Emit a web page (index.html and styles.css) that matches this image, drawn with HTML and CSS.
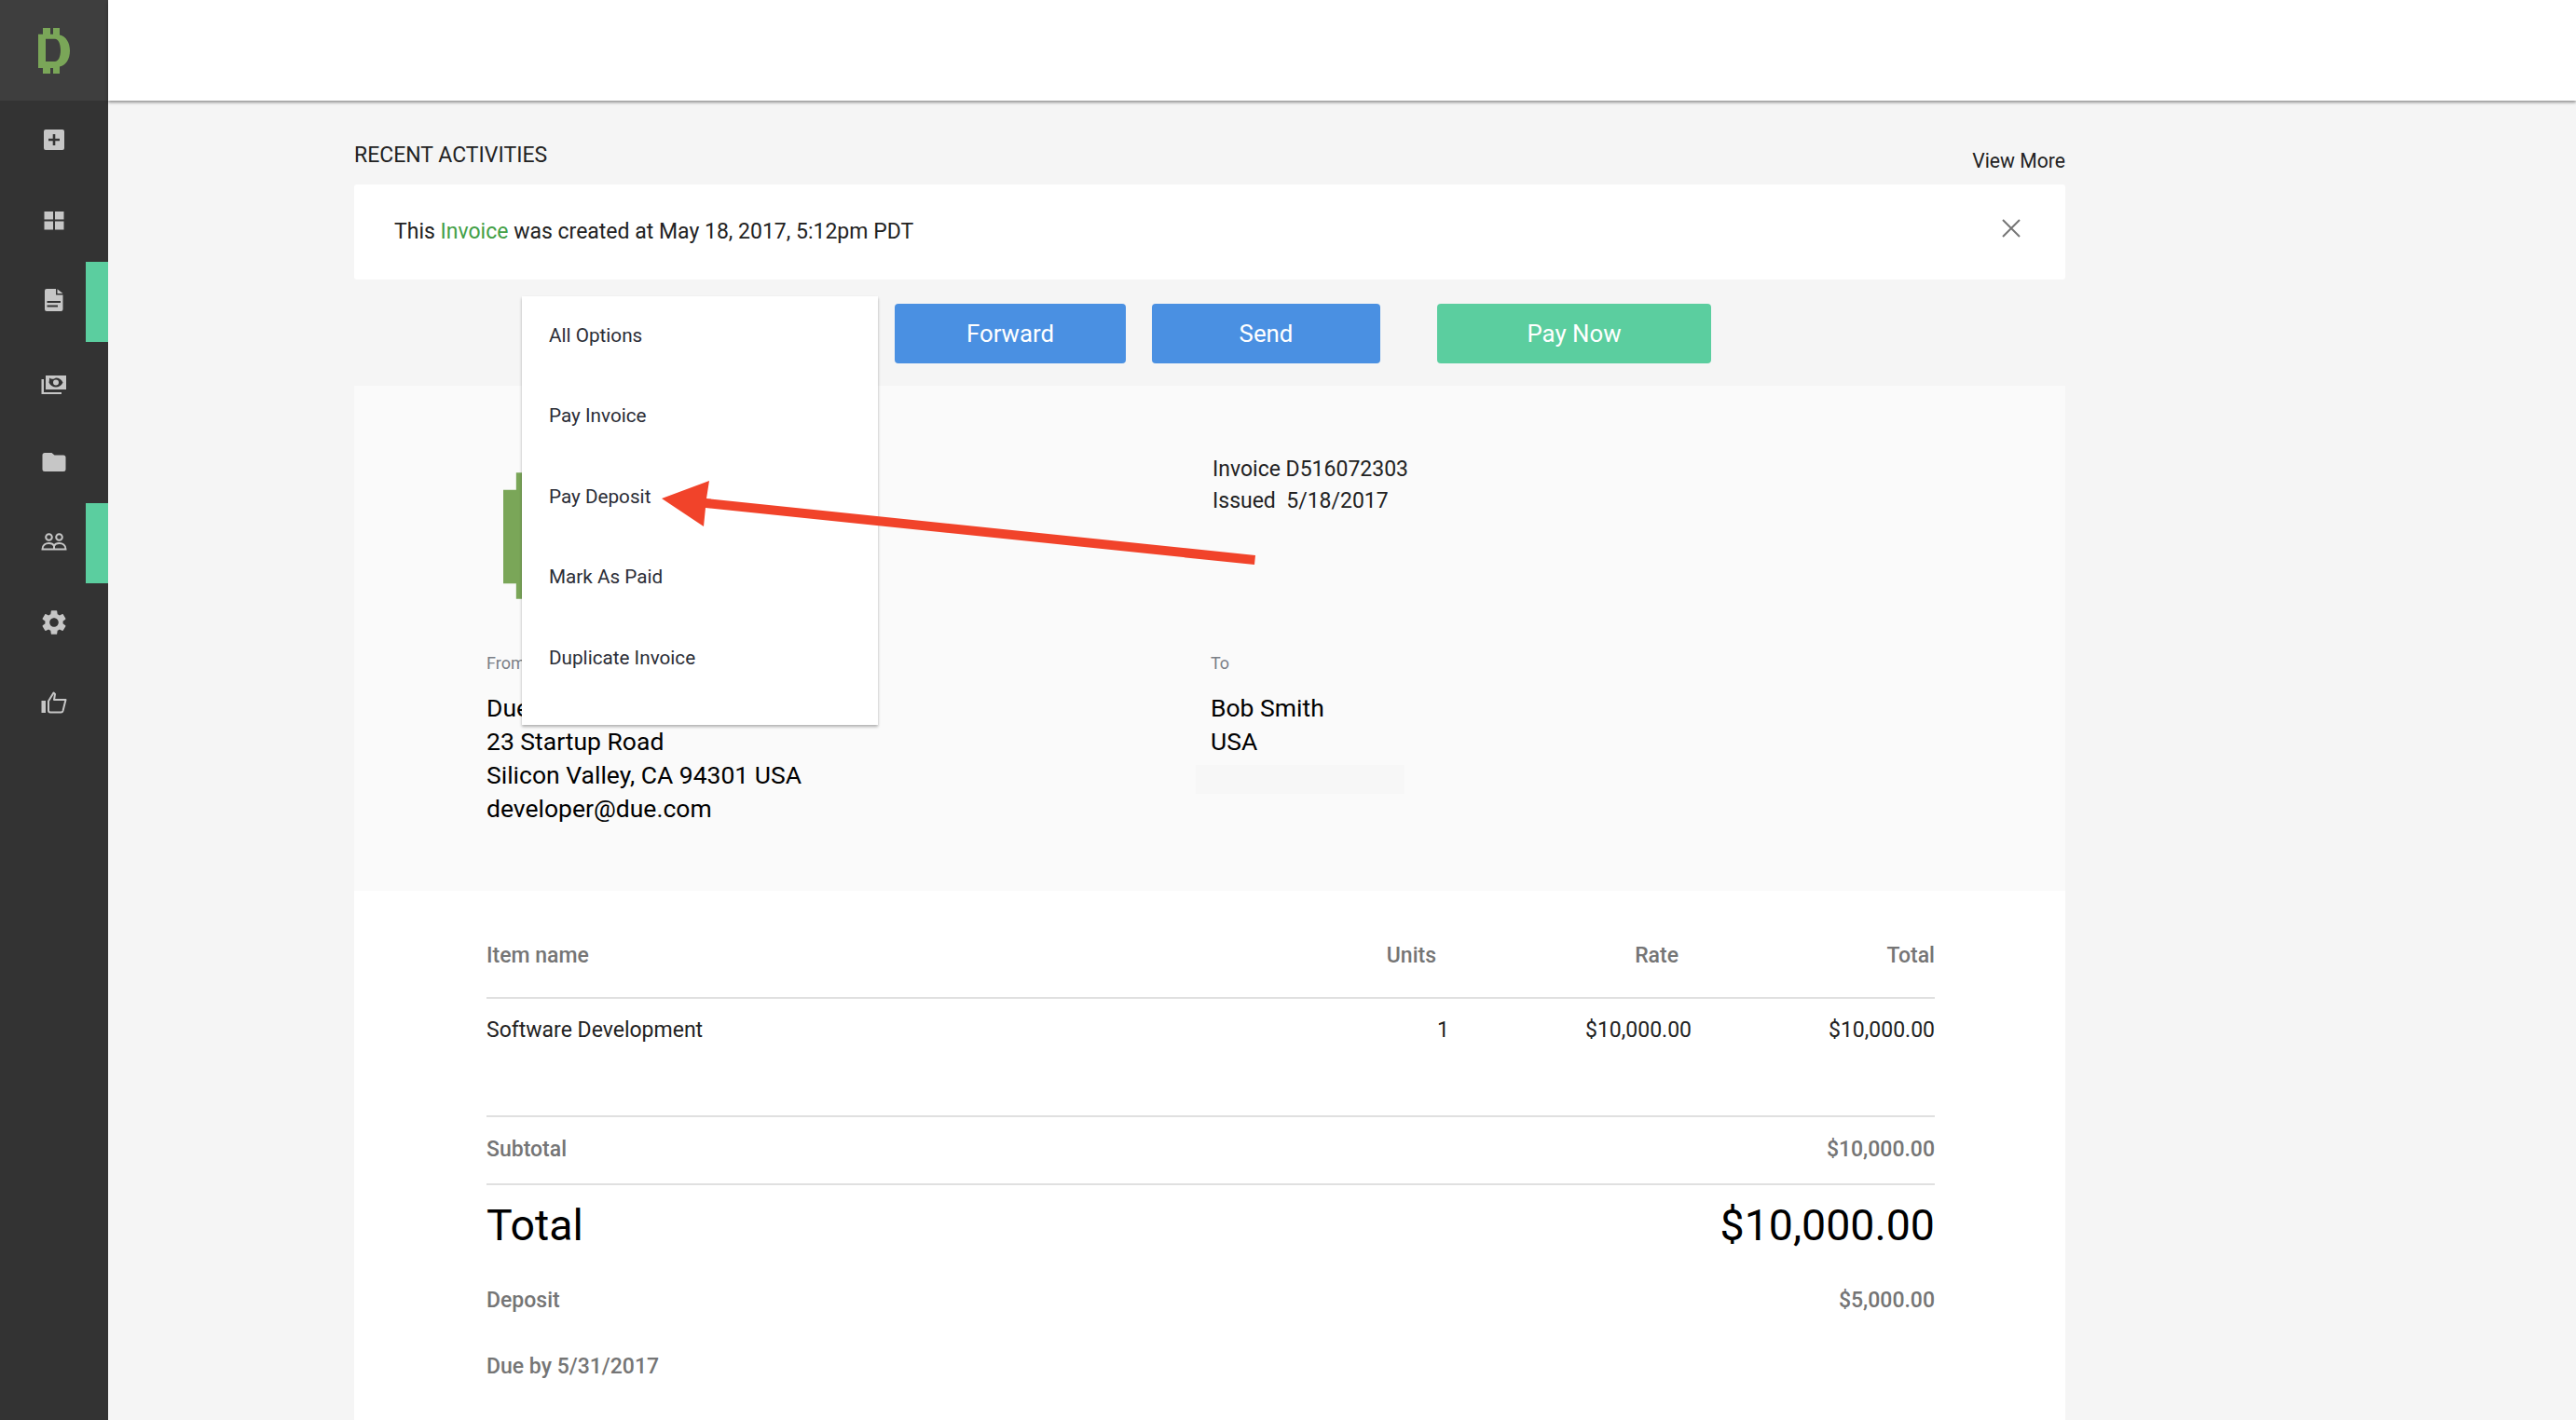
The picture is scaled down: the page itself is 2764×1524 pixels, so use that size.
FILE: index.html
```html
<!DOCTYPE html>
<html>
<head>
  <meta charset="UTF-8">
  <title>Invoice</title>
  <link rel="stylesheet" href="styles.css">
</head>
<body>
  <div class="sidebar">
    <div class="brand">
      <svg class="logo-small" viewBox="0 0 34 49"><path fill-rule="evenodd" d="M0 6.7H5V0H13V6.7H16V0H23V7.5C30 9 34 16 34 24.5C34 33 30 40 23 41.5V49H16V43H13V49H5V43H0ZM8 11.7V36H18C21.500 36 24 31 24 24C24 17 21.500 11.7 18 11.7Z"/></svg>
    </div>
    <div class="nav-item">
      <svg class="icon" viewBox="0 0 32 32"><path fill-rule="evenodd" d="M7 5H25A2 2 0 0 1 27 7V25A2 2 0 0 1 25 27H7A2 2 0 0 1 5 25V7A2 2 0 0 1 7 5ZM14.7 10V14.7H10V17.3H14.7V22H17.3V17.3H22V14.7H17.3V10Z"/></svg>
    </div>
    <div class="nav-item">
      <svg class="icon" viewBox="0 0 32 32"><path d="M5.500 7H15V15.500H5.500ZM17 7H26.500V15.500H17ZM5.500 17.500H15V26.500H5.500ZM17 17.500H26.500V26.500H17Z"/></svg>
    </div>
    <div class="nav-item active">
      <svg class="icon" viewBox="0 0 32 32"><path fill-rule="evenodd" d="M8 4H18V10.500H25.500V26A2 2 0 0 1 23.500 28H8A2 2 0 0 1 6 26V6A2 2 0 0 1 8 4ZM19.500 4.300L25.500 9H19.500ZM8.500 17V19H23V17ZM8.500 21.500V23.500H20V21.500Z"/></svg>
    </div>
    <div class="nav-item">
      <svg class="icon icon-money" viewBox="0 0 32 32"><path fill-rule="evenodd" d="M7 6H29V21H7ZM11 8.500C13 10 15 10.500 18 8.500C21 8.500 24 10 25.500 13.500C24 17 21 18.500 18 18.500C15 18.500 12 17 10.500 13.500C11 11.500 11 10 11 8.500ZM18 10.500A3 3 0 1 0 18 16.500A3 3 0 1 0 18 10.500ZM2.500 10H5V24H24V26H2.500Z"/></svg>
    </div>
    <div class="nav-item">
      <svg class="icon" viewBox="0 0 32 32"><path d="M6 7H13.500L16.500 9.500H26A2.500 2.500 0 0 1 28.500 12V24.500A2.500 2.500 0 0 1 26 27H6A2.500 2.500 0 0 1 3.500 24.500V9.500A2.500 2.500 0 0 1 6 7Z"/></svg>
    </div>
    <div class="nav-item active">
      <svg class="icon icon-line" viewBox="0 0 32 32"><circle cx="10.500" cy="10.500" r="3.300"/><circle cx="21.500" cy="10.500" r="3.300"/><path d="M3.500 23.500H28.500C28.500 19 25 17 21.500 17C19 17 17 18 16 19.800C15 18 13 17 10.500 17C7 17 3.500 19 3.500 23.500ZM16 19.800V23.500"/></svg>
    </div>
    <div class="nav-item">
      <svg class="icon" viewBox="0 0 24 24"><path d="M19.140 12.940c.04-.3.06-.61.06-.94 0-.32-.02-.64-.07-.94l2.030-1.580c.18-.14.23-.41.12-.61l-1.920-3.320c-.12-.22-.37-.29-.59-.22l-2.390.96c-.5-.38-1.030-.7-1.620-.94l-.36-2.540c-.04-.24-.24-.41-.48-.41h-3.840c-.24 0-.43.17-.47.41l-.36 2.540c-.59.24-1.130.57-1.620.94l-2.390-.96c-.22-.08-.47 0-.59.22L2.740 8.870c-.12.21-.08.47.12.61l2.030 1.580c-.05.3-.09.63-.09.94s.02.64.07.94l-2.030 1.580c-.18.14-.23.41-.12.61l1.920 3.320c.12.22.37.29.59.22l2.390-.96c.5.38 1.030.7 1.620.94l.36 2.540c.05.24.24.41.48.41h3.840c.24 0 .44-.17.47-.41l.36-2.540c.59-.24 1.130-.56 1.620-.94l2.390.96c.22.08.47 0 .59-.22l1.920-3.320c.12-.22.07-.47-.12-.61l-2.010-1.580zM12 15.600c-1.980 0-3.600-1.620-3.600-3.600s1.620-3.600 3.600-3.600 3.600 1.620 3.600 3.600-1.620 3.600-3.600 3.600z"/></svg>
    </div>
    <div class="nav-item">
      <svg class="icon icon-thumb" viewBox="0 0 32 32"><path d="M2.500 14H7V27H2.500Z" class="solid"/><path d="M10 14.500L15.500 5.500L17 7L16 13H28.500L25.500 25C25.200 26 24.500 26.500 23.500 26.500H12C10.800 26.500 10 25.700 10 24.500Z"/></svg>
    </div>
  </div>

  <div class="main">
    <div class="topbar"></div>
    <div class="content">
      <div class="activity-head">
        <span class="activity-title">RECENT ACTIVITIES</span>
        <span class="view-more">View More</span>
      </div>

      <div class="notice">
        <span>This <span class="notice-link">Invoice</span> was created at May 18, 2017, 5:12pm PDT</span>
        <svg class="notice-close" viewBox="0 0 20 20"><path d="M1 1L19 19M19 1L1 19"/></svg>
      </div>

      <div class="action-bar">
        <div class="menu">
          <div class="menu-item">All Options</div>
          <div class="menu-item">Pay Invoice</div>
          <div class="menu-item">Pay Deposit</div>
          <div class="menu-item">Mark As Paid</div>
          <div class="menu-item">Duplicate Invoice</div>
        </div>
        <button class="btn btn-forward">Forward</button>
        <button class="btn btn-send">Send</button>
        <button class="btn btn-pay">Pay Now</button>
      </div>

      <div class="invoice-top">
        <div class="invoice-col">
          <svg class="logo-large" viewBox="0 0 34 49"><path fill-rule="evenodd" d="M0 6.7H5V0H13V6.7H16V0H23V7.5C30 9 34 16 34 24.5C34 33 30 40 23 41.5V49H16V43H13V49H5V43H0ZM8 11.7V36H18C21.500 36 24 31 24 24C24 17 21.500 11.7 18 11.7Z"/></svg>
          <div class="party-label">From</div>
          <div class="party">
            <div>Due</div>
            <div>23 Startup Road</div>
            <div>Silicon Valley, CA 94301 USA</div>
            <div>developer@due.com</div>
          </div>
        </div>
        <div class="invoice-col">
          <div class="invoice-meta">
            <div>Invoice D516072303</div>
            <div>Issued&nbsp; 5/18/2017</div>
          </div>
          <div class="party-label">To</div>
          <div class="party">
            <div>Bob Smith</div>
            <div>USA</div>
            <div class="redacted"></div>
          </div>
        </div>
      </div>

      <div class="invoice-body">
        <div class="line-row line-head">
          <div>Item name</div>
          <div class="cell-num">Units</div>
          <div class="cell-num">Rate</div>
          <div class="cell-total">Total</div>
        </div>
        <div class="line-row line-item">
          <div>Software Development</div>
          <div class="cell-right">1</div>
          <div class="cell-right">$10,000.00</div>
          <div class="cell-right">$10,000.00</div>
        </div>
        <div class="sum-row sum-subtotal"><span>Subtotal</span><span>$10,000.00</span></div>
        <div class="sum-row sum-total"><span>Total</span><span>$10,000.00</span></div>
        <div class="sum-row sum-deposit"><span>Deposit</span><span>$5,000.00</span></div>
        <div class="sum-row sum-due"><span>Due by 5/31/2017</span></div>
      </div>
    </div>
  </div>

  <svg class="arrow" viewBox="0 0 660 110"><polygon points="10,25 61,6 58,25 647,86 646,96 57,35 55,55"/></svg>
</body>
</html>
```

FILE: styles.css
```css
html, body {
  width: 100%;
  height: 100%;
  margin: 0;
  padding: 0;
  overflow: hidden;
}

body {
  display: flex;
  position: relative;
  font-family: Roboto, "Liberation Sans", sans-serif;
  background-color: #f5f5f5;
  color: #222;
}

.sidebar {
  width: 116px;
  flex-shrink: 0;
  background-color: #333;
}

.brand {
  height: 108px;
  background-color: #3e3e3e;
  display: flex;
  align-items: center;
  justify-content: center;
}

.logo-small {
  width: 34px;
  height: 49px;
  fill: #7aa658;
}

.nav-item {
  height: 86.4px;
  box-sizing: border-box;
  padding-left: 24px;
  border-right: 24px solid transparent;
  display: flex;
  align-items: center;
  justify-content: center;
}

.nav-item.active {
  border-right-color: #5bce9f;
}

.icon {
  width: 32px;
  height: 32px;
  margin-bottom: 3px;
  fill: #c6c6c6;
}

.icon-money {
  margin: 5px 0 0;
}

.icon-line {
  fill: none;
  stroke: #c6c6c6;
  stroke-width: 2;
}

.icon-thumb {
  fill: none;
  stroke: #c6c6c6;
  stroke-width: 2;
  stroke-linejoin: round;
}

.icon-thumb .solid {
  fill: #c6c6c6;
  stroke: none;
}

.main {
  flex: 1;
  min-width: 0;
}

.topbar {
  height: 108px;
  background-color: #fff;
  box-shadow: 0 2px 3px rgba(0, 0, 0, 0.4);
}

.content {
  width: 1836px;
  margin-left: 264px;
}

.activity-head {
  height: 90px;
  display: flex;
  justify-content: space-between;
  box-sizing: border-box;
}

.activity-title {
  font-size: 23px;
  line-height: 30px;
  margin-top: 44px;
  color: #222;
}

.view-more {
  font-size: 21.2px;
  line-height: 30px;
  margin-top: 50px;
  color: #222;
}

.notice {
  height: 102px;
  background-color: #fff;
  border-radius: 3px;
  box-sizing: border-box;
  padding: 0 48px 6px 43px;
  display: flex;
  align-items: center;
  justify-content: space-between;
  font-size: 23px;
}

.notice > span {
  margin-top: 4px;
}

.notice-link {
  color: #43a047;
}

.notice-close {
  width: 20px;
  height: 20px;
  margin-bottom: 2px;
  fill: none;
  stroke: #757575;
  stroke-width: 2;
}

.action-bar {
  position: relative;
  display: flex;
  height: 64px;
  margin-top: 26px;
  margin-bottom: 24px;
  padding-left: 580px;
}

.menu {
  position: absolute;
  left: 180px;
  top: -8px;
  width: 382px;
  height: 460px;
  box-sizing: border-box;
  padding-top: 0;
  background-color: #fff;
  box-shadow: 0 2px 3px rgba(0, 0, 0, 0.3);
  z-index: 2;
}

.menu-item {
  height: 86.5px;
  padding: 0 29px;
  display: flex;
  align-items: center;
  position: relative;
  top: -1.5px;
  font-size: 20.7px;
  color: #2b2d36;
}

.btn {
  height: 64px;
  border: none;
  border-radius: 4px;
  color: #fff;
  font-family: inherit;
  font-size: 25.8px;
  padding: 0;
}

.btn-forward {
  width: 248px;
  background-color: #4a90e2;
}

.btn-send {
  width: 245px;
  margin-left: 28px;
  background-color: #4a90e2;
}

.btn-pay {
  width: 294px;
  margin-left: 61px;
  background-color: #5bce9f;
}

.invoice-top {
  height: 542px;
  box-sizing: border-box;
  padding: 71px 0 0 142px;
  background-color: #fafafa;
  display: flex;
}

.invoice-col:first-child {
  width: 777px;
}

.logo-large {
  display: block;
  width: 94px;
  height: 136px;
  margin: 22px 0 57px 18px;
  fill: #7aa658;
}

.invoice-meta {
  height: 213px;
  padding-top: 2px;
  margin-left: 2px;
  font-size: 23px;
  line-height: 34px;
  color: #222;
}

.party-label {
  font-size: 18px;
  line-height: 24px;
  color: #7a7f87;
  margin-bottom: 18px;
}

.party {
  font-size: 26.5px;
  line-height: 36px;
  color: #000;
}

.redacted {
  width: 224px;
  height: 31px;
  margin: 7px 0 0 -16px;
  background-color: #f7f7f7;
}

.invoice-body {
  background-color: #fff;
  padding: 0 140px 0 142px;
  height: 600px;
  font-size: 23px;
}

.line-row {
  display: grid;
  grid-template-columns: 933px 100px 260px 261px;
  line-height: 30px;
}

.line-head {
  padding: 55px 0 29px;
  border-bottom: 2px solid #e0e0e0;
  font-weight: 500;
  color: #757575;
}

.cell-num {
  text-align: right;
  padding-right: 14px;
}

.cell-total,
.cell-right {
  text-align: right;
}

.line-item {
  padding: 19px 0 76px;
  border-bottom: 2px solid #e0e0e0;
  color: #222;
}

.sum-row {
  display: flex;
  justify-content: space-between;
  line-height: 30px;
  font-weight: 500;
  color: #757575;
}

.sum-subtotal {
  padding: 20px 0 21px;
  border-bottom: 2px solid #e0e0e0;
}

.sum-total {
  padding-top: 13px;
  font-size: 46.5px;
  line-height: 60px;
  font-weight: 400;
  color: #000;
}

.sum-deposit {
  margin-top: 36px;
}

.sum-due {
  margin-top: 41px;
}

.arrow {
  position: absolute;
  left: 700px;
  top: 510px;
  width: 660px;
  height: 110px;
  fill: #f1432a;
  z-index: 3;
}
```
